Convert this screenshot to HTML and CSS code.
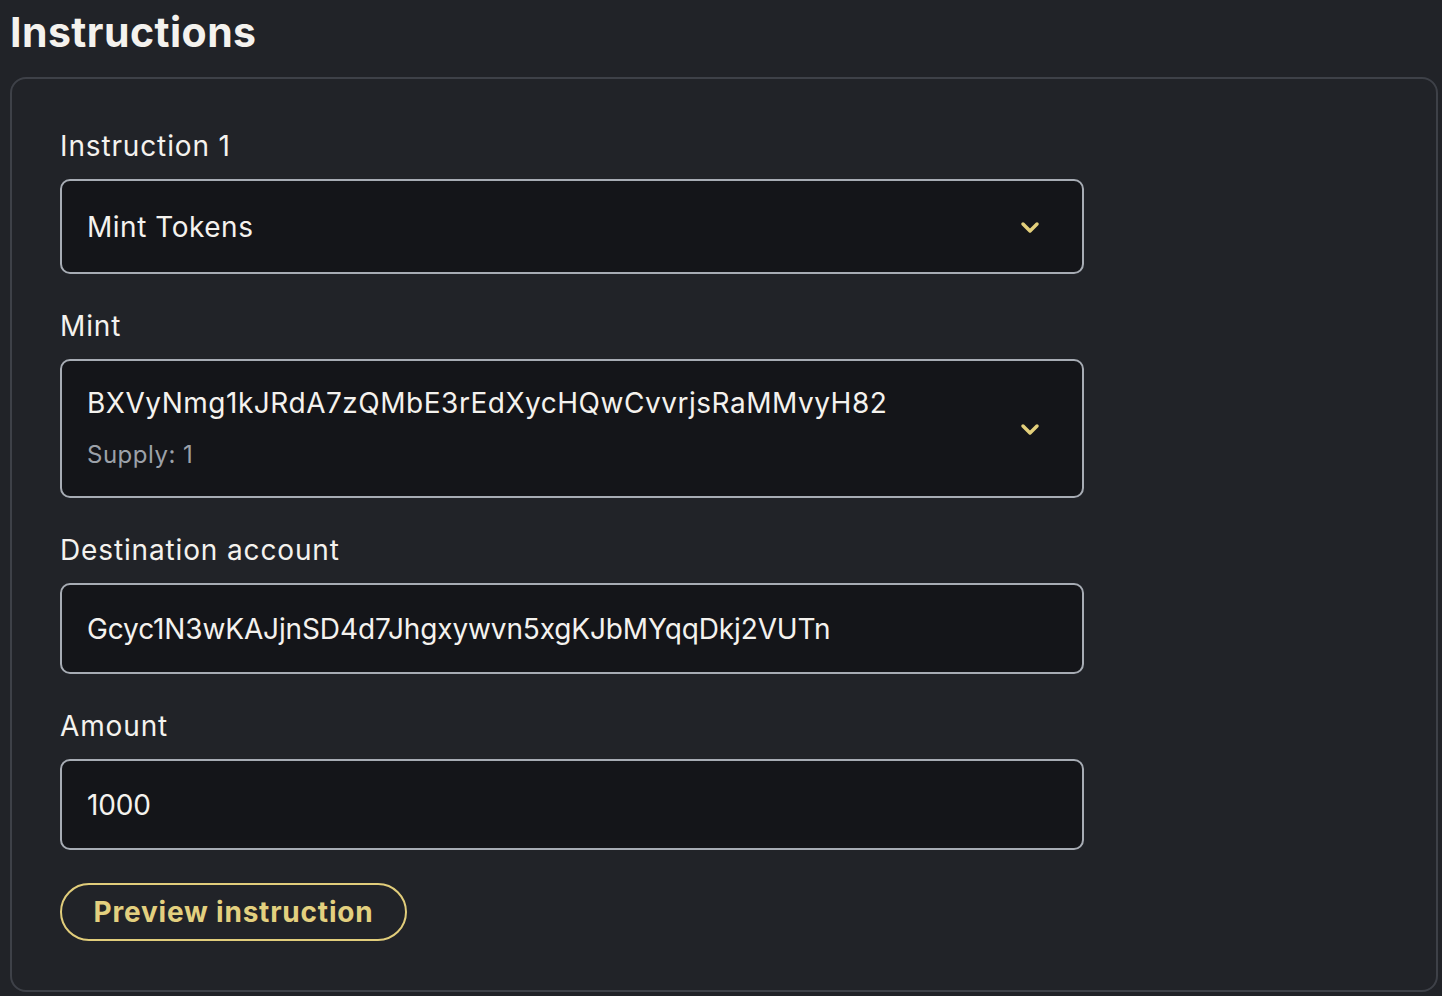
FILE: index.html
```html
<!DOCTYPE html>
<html>
<head>
<meta charset="utf-8">
<link rel="stylesheet" href="styles.css">
</head>
<body>
<h1 class="title">Instructions</h1>
<section class="card">
  <div class="field">
    <label class="label">Instruction 1</label>
    <div class="box select tall-1">
      <span class="value value-select">Mint Tokens</span>
      <svg class="chev" viewBox="0 0 24 24" width="24" height="24"><path d="M5 9l7 7 7-7" fill="none" stroke="currentColor" stroke-width="3.5" stroke-linecap="round" stroke-linejoin="round"/></svg>
    </div>
  </div>
  <div class="field">
    <label class="label">Mint</label>
    <div class="box select mint">
      <div class="stack">
        <span class="value value-select">BXVyNmg1kJRdA7zQMbE3rEdXycHQwCvvrjsRaMMvyH82</span>
        <span class="sub">Supply: 1</span>
      </div>
      <svg class="chev" viewBox="0 0 24 24" width="24" height="24"><path d="M5 9l7 7 7-7" fill="none" stroke="currentColor" stroke-width="3.5" stroke-linecap="round" stroke-linejoin="round"/></svg>
    </div>
  </div>
  <div class="field">
    <label class="label">Destination account</label>
    <div class="box input"><span class="value value-input">Gcyc1N3wKAJjnSD4d7Jhgxywvn5xgKJbMYqqDkj2VUTn</span></div>
  </div>
  <div class="field">
    <label class="label">Amount</label>
    <div class="box input"><span class="value value-input">1000</span></div>
  </div>
  <button class="btn">Preview instruction</button>
</section>
</body>
</html>
```
FILE: styles.css
```css
* { box-sizing: border-box; }
html, body { margin: 0; padding: 0; }
body {
  background: #212328;
  font-family: Inter, "Noto Sans", sans-serif;
  color: #f4f2ee;
  padding: 0 4px 0 10px;
  height: 996px;
  overflow: hidden;
}
.title {
  margin: 0;
  padding-top: 6px;
  font-size: 41px;
  line-height: 52px;
  font-weight: 700;
  letter-spacing: 0.45px;
  color: #f4f2ee;
}
.card {
  margin-top: 19px;
  border: 2px solid #3e4148;
  border-radius: 16px;
  padding: 46px 48px 48px 48px;
  display: flex;
  flex-direction: column;
  align-items: flex-start;
  height: 915px;
}
.field {
  width: 1024px;
  display: flex;
  flex-direction: column;
  margin-bottom: 31px;
}
.label {
  font-size: 28px;
  line-height: 40px;
  letter-spacing: 0.86px;
  color: #f4f2ee;
  margin-bottom: 13px;
  padding-top: 1px;
}
.box {
  background: #141519;
  border: 2px solid #a7acb4;
  border-radius: 10px;
  padding: 0 24px 0 25px;
  display: flex;
  align-items: center;
  justify-content: space-between;
}
.tall-1 { height: 95px; }
.mint { height: 139px; }
.input { height: 91px; }
.value {
  font-size: 28px;
  color: #f4f2ee;
}
.value-select { letter-spacing: 0.52px; }
.value-input { letter-spacing: -0.13px; }
.stack {
  display: flex;
  flex-direction: column;
  gap: 20px;
  padding-bottom: 2px;
}
.sub {
  font-size: 24px;
  color: #9ca1a9;
  letter-spacing: 0.5px;
}
.chev {
  color: #e3cf7b;
  margin-right: 16px;
}
.btn {
  margin-top: 2px;
  height: 58px;
  width: 347px;
  border: 2px solid #e1cd7b;
  border-radius: 30px;
  background: transparent;
  color: #e3d07f;
  font-family: Inter, "Noto Sans", sans-serif;
  font-size: 28px;
  font-weight: 700;
  letter-spacing: 0.8px;
  padding: 0;
}
```
